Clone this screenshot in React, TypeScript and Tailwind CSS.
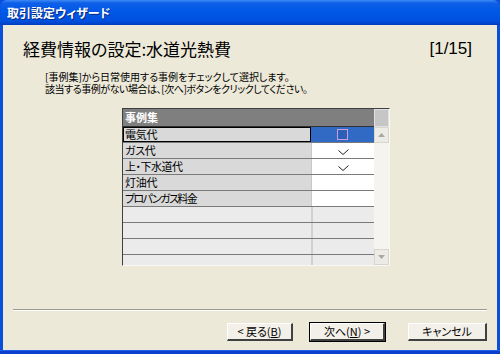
import React from 'react';

const jp = "font-['MS_UI_Gothic','Noto_Sans_CJK_JP',sans-serif] [font-feature-settings:'palt']";

const rows = [
    { name: 'ガス代', checked: true, track: 'tracking-[-0.3px]' },
    { name: '上・下水道代', checked: true, track: 'tracking-[-0.5px]' },
    { name: '灯油代', checked: false, track: 'tracking-[-0.3px]' },
    { name: 'プロパンガス料金', checked: false, track: 'tracking-[-1.6px]' },
];

function Check() {
    return (
        <svg width="11" height="7" viewBox="0 0 11 7" className="mt-[6px]">
            <path d="M0.5 1.5 L5 5.5 L10.5 0.5" fill="none" stroke="#222" strokeWidth="1" />
        </svg>
    );
}

function Arrow({ up }: { up?: boolean }) {
    return (
        <div className="h-[16px] w-full bg-[#ecebe5] border border-[#d8d6cc] flex items-center justify-center">
            <svg width="7" height="4" viewBox="0 0 7 4">
                <path d={up ? 'M0 4 L3.5 0 L7 4 Z' : 'M0 0 L3.5 4 L7 0 Z'} fill="#a8a8a0" />
            </svg>
        </div>
    );
}

function Btn({ children, focused, w }: { children: React.ReactNode; focused?: boolean; w: string }) {
    return (
        <div className={focused ? `${w} h-[18px] outline outline-1 outline-black` : `${w} h-[18px]`}>
            <div className="h-full w-full bg-[#f2f0e8] border-t border-l border-white border-r-2 border-b-2 border-r-[#404040] border-b-[#404040] flex items-center justify-center text-[11px] text-black leading-none">
                {children}
            </div>
        </div>
    );
}

export default function App() {
    return (
        <div className={`w-[500px] h-[354px] flex flex-col bg-[#0a4fdc] ${jp}`}>
            {/* title bar */}
            <div className="h-[25px] rounded-t-[7px] bg-[linear-gradient(to_bottom,#3d8bf5_0%,#0f5fe8_12%,#0058e6_45%,#0050de_85%,#003bbf_100%)] flex items-center pl-[7px]">
                <span className="text-white text-[12px] font-bold [text-shadow:1px_1px_0_#0a2a80]">取引設定ウィザード</span>
            </div>

            {/* body */}
            <div className="mx-[3px] h-[325px] bg-[#ece9d8] flex flex-col">
                <div className="flex items-center justify-between pl-[20px] pr-[25px] pt-[12px] h-[36px]">
                    <span className="text-[17px] text-black leading-[24px]">経費情報の設定:水道光熱費</span>
                    <span className="text-[17px] text-black leading-[24px] font-['Liberation_Sans',sans-serif]">[1/15]</span>
                </div>

                <div className="pl-[42px] mt-[10px] text-[10px] leading-[12px] text-black">
                    <div>[事例集]から日常使用する事例をチェックして選択します。</div>
                    <div className="tracking-[-0.45px]">該当する事例がない場合は、[次へ]ボタンをクリックしてください。</div>
                </div>

                {/* list */}
                <div className="ml-[119px] mt-[13px] w-[268px] h-[158px] border-t border-l border-[#404040] border-r border-b border-r-[#f8f8f8] border-b-[#f8f8f8] shadow-[inset_1px_1px_0_#808080] flex">
                    <div className="w-[251px] flex flex-col">
                        <div className="h-[18px] bg-[#7f7f7f] flex items-center pl-[2px] text-white text-[11px] font-bold border-b border-[#303030]">事例集</div>
                        <div className="h-[16px] flex border-b border-[#7a7a7a]">
                            <div className="w-[188px] bg-[#d9d9d9] text-[11px] text-black pl-[1px] leading-[13px] border border-black">
                                <span className="tracking-[-0.3px]">電気代</span>
                            </div>
                            <div className="w-[63px] h-full bg-[#316ac5] flex items-center justify-center">
                                <div className="w-[11px] h-[11px] border border-[#c9a0d8] bg-[#2c5fb8]" />
                            </div>
                        </div>
                        {rows.map((r) => (
                            <div key={r.name} className="h-[16px] flex border-b border-[#7a7a7a]">
                                <div className="w-[188px] bg-[#d9d9d9] text-[11px] text-black pl-[2px] leading-[15px]">
                                    <span className={r.track}>{r.name}</span>
                                </div>
                                <div className="flex-1 flex justify-center bg-white border-l border-[#c8c8c8]">
                                    {r.checked && <Check />}
                                </div>
                            </div>
                        ))}
                        {[0, 1, 2].map((i) => (
                            <div key={i} className="h-[16px] flex border-b border-[#7a7a7a]">
                                <div className="w-[188px] bg-[#ebebeb]" />
                                <div className="flex-1 bg-[#ebebeb] border-l-2 border-[#d0d0d0]" />
                            </div>
                        ))}
                        <div className="flex-1 flex">
                            <div className="w-[188px] bg-[#ebebeb]" />
                            <div className="flex-1 bg-[#ebebeb] border-l-2 border-[#d0d0d0]" />
                        </div>
                    </div>
                    <div className="flex-1 flex flex-col bg-[#f5f4ef]">
                        <div className="h-[18px] bg-[#c6c6c6] border border-[#e0e0e0]" />
                        <Arrow up />
                        <div className="flex-1" />
                        <Arrow />
                    </div>
                </div>

                {/* separator */}
                <div className="mx-[10px] mt-[43px] h-[2px] border-t border-[#9d9a8c] border-b border-b-white" />

                {/* buttons */}
                <div className="flex mt-[12px] pl-[224px]">
                    <Btn w="w-[66px]">&lt; 戻る(<span className="underline">B</span>)</Btn>
                    <div className="w-[17px]" />
                    <Btn w="w-[75px]" focused>次へ(<span className="underline">N</span>) &gt;</Btn>
                    <div className="w-[23px]" />
                    <Btn w="w-[79px]">キャンセル</Btn>
                </div>
            </div>
            <div className="flex-1 bg-[#0a3fcc] border-t border-[#1e60f0]" />
        </div>
    );
}
